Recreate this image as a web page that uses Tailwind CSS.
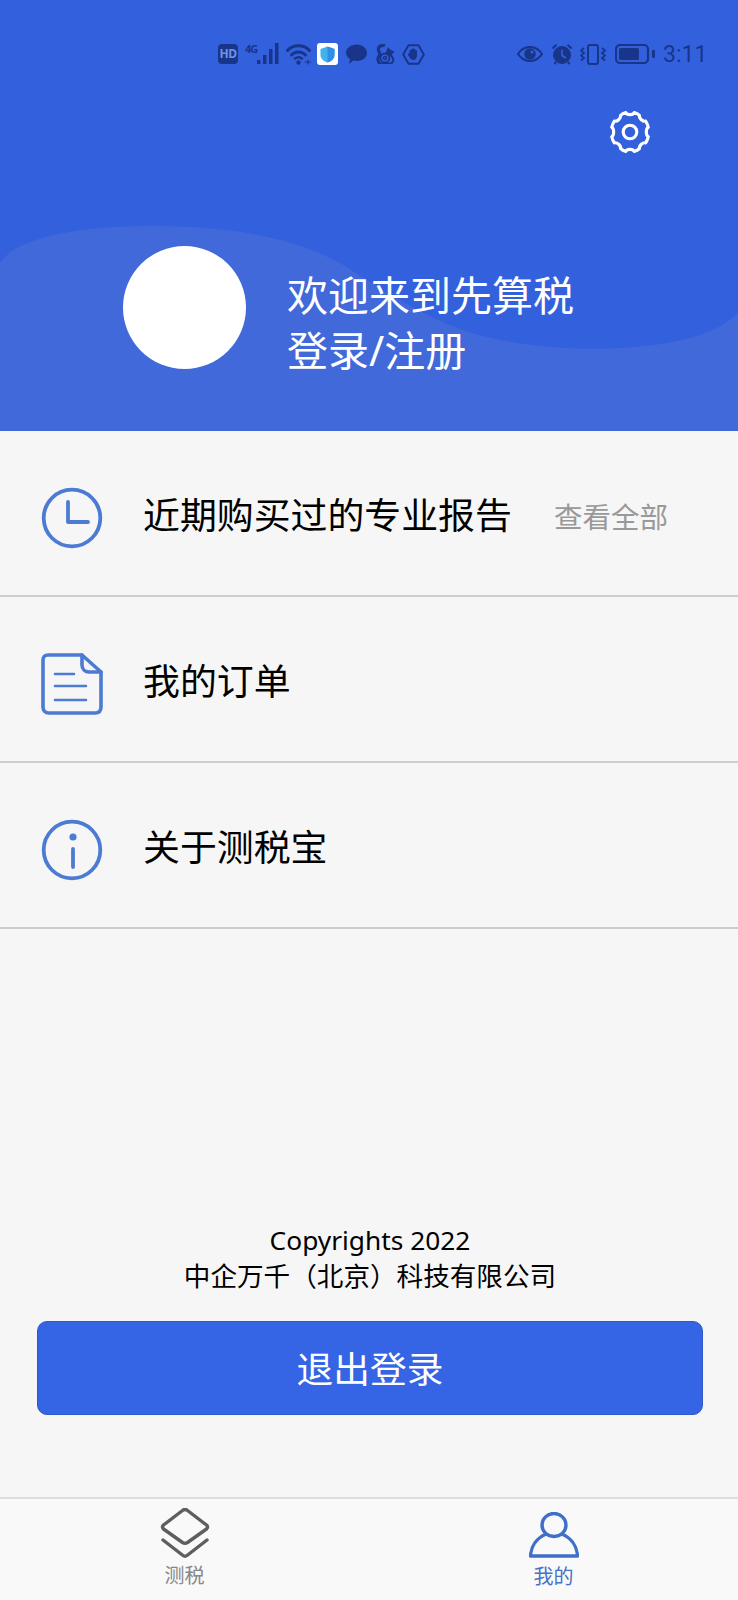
<!DOCTYPE html>
<html lang="zh-CN">

<head>
  <meta charset="UTF-8" />
  <meta name="viewport" content="width=device-width, initial-scale=1.0" />
  <title>我的</title>
  <script src="https://cdn.jsdelivr.net/npm/@tailwindcss/browser@4"></script>
</head>

<body class="bg-[#f6f6f6] font-['Noto_Sans','Noto_Sans_CJK_SC',sans-serif] text-black">
  <div class="w-[738px] h-[1600px] flex flex-col overflow-hidden">

    <!-- Header -->
    <header class="relative h-[431px] bg-[#3361de] shrink-0 overflow-hidden">
      <svg class="absolute inset-0" width="738" height="431" viewBox="0 0 738 431">
        <path d="M0 263C14 240 70 226 150 226C240 226 300 240 345 266C395 298 440 328 500 340C560 352 640 352 690 338C715 331 730 322 738 312V431H0Z" fill="#4169d9" />
      </svg>

      <!-- Status bar -->
      <div class="relative flex items-center h-[24px] mt-[42px] pl-[218px] text-[#18358a]">
        <div class="w-[20px] h-[20px] rounded-[4px] bg-[#18358a] flex items-center justify-center text-[#6f93e8] text-[12px] font-bold leading-none tracking-[-0.5px]">HD</div>
        <div class="w-[12px] ml-[7px] mb-[11px] text-[11px] font-bold leading-none tracking-[-1px]">4G</div>
        <svg width="22" height="22" viewBox="0 0 22 22" fill="currentColor">
          <rect x="0" y="17" width="3.500" height="4" />
          <rect x="6" y="12" width="3.500" height="9" />
          <rect x="12" y="6" width="3.500" height="15" />
          <rect x="18" y="0" width="3.500" height="21" />
        </svg>
        <svg class="ml-[7px]" width="25" height="22" viewBox="0 0 25 22" fill="none" stroke="currentColor" stroke-width="3" stroke-linecap="round">
          <path d="M1.500 7.500C7 1 18 1 23.500 7.500" />
          <path d="M5.500 12C9 8 16 8 19.500 12" />
          <path d="M9 15.500C11 14 14 14 16 15.500" stroke-width="2.400" />
          <circle cx="12.500" cy="19.500" r="2.200" fill="currentColor" stroke="none" />
          <path d="M19 19H24.500M22 17V21" stroke-width="1.200" />
        </svg>
        <div class="ml-[6px] w-[21px] h-[22px] rounded-[3px] bg-white flex items-center justify-center">
          <svg width="15" height="17" viewBox="0 0 15 17">
            <path d="M7.500 0.500L14.500 3V9C14.500 13 11 15.500 7.500 16.500C4 15.500 0.500 13 0.500 9V3Z" fill="#45b0ee" />
            <path d="M7.500 0.500L14.500 3V9C14.500 13 11 15.500 7.500 16.500Z" fill="#2f8fe6" />
          </svg>
        </div>
        <svg class="ml-[8px]" width="21" height="20" viewBox="0 0 21 20" fill="currentColor">
          <path d="M10.500 0.500C16 0.500 21 4 21 9C21 14 16 17 10.500 17C9.500 17 8.500 16.900 7.500 16.600L3 20L4 15C1.800 13.500 0 11.500 0 9C0 4 5 0.500 10.500 0.500Z" />
        </svg>
        <svg class="ml-[8px]" width="20" height="20" viewBox="0 0 20 20" fill="none" stroke="currentColor">
          <path d="M10 1.500C5.500 0.500 2.500 3.500 3.500 6.500C4.500 9 6 9.500 3.500 13C2.500 15 3 18 5 19.500" stroke-width="3.200" />
          <circle cx="10" cy="14" r="4.500" stroke-width="1.800" />
          <circle cx="10" cy="14" r="1.500" stroke-width="1.400" />
          <path d="M5 19.500H16C18.500 18 19 15 17 12.500L12.500 8.500" stroke-width="2" />
          <path d="M10.500 9.500L13 3L15 5.500L19.500 7.500L16.500 11L13 11Z" fill="currentColor" stroke="none" />
        </svg>
        <svg class="ml-[7px]" width="23" height="21" viewBox="0 0 23 21">
          <path d="M6.500 1.200H16.500L21.800 10.500L16.500 19.800H6.500L1.200 10.500Z" fill="none" stroke="currentColor" stroke-width="2" stroke-linejoin="round" />
          <path d="M7.500 9.500V6.800C7.500 5.800 9 5.800 9 6.800V5.500C9 4.500 10.500 4.500 10.500 5.500V5C10.500 4 12 4 12 5V5.500C12 4.500 13.500 4.500 13.500 5.500V6.800C13.500 5.800 15 5.800 15 6.800V11.500C15 14 13.500 16 11.500 16C9.500 16 8.500 15 7.500 13.500L6 11C5.500 10 6.800 9 7.500 9.500Z" fill="currentColor" />
        </svg>

        <svg class="ml-[92px]" width="26" height="16" viewBox="0 0 26 16">
          <path d="M1 8C4 3.500 8 1 13 1C18 1 22 3.500 25 8C22 12.500 18 15 13 15C8 15 4 12.500 1 8Z" fill="none" stroke="currentColor" stroke-width="2.200" />
          <circle cx="13" cy="8" r="5.800" fill="currentColor" />
          <circle cx="15" cy="6" r="1.500" fill="#3361de" />
        </svg>
        <svg class="ml-[8px]" width="22" height="22" viewBox="0 0 22 22" fill="none" stroke="currentColor">
          <circle cx="11" cy="12" r="8.500" fill="currentColor" />
          <path d="M11 6.500V12.500L15 15" stroke="#3361de" stroke-width="1.600" />
          <path d="M1.500 5.500L5.500 1.800M20.500 5.500L16.500 1.800M5 19L3.500 21M17 19L18.500 21" stroke-width="2.200" />
        </svg>
        <svg class="ml-[7px]" width="26" height="21" viewBox="0 0 26 21" fill="none" stroke="currentColor" stroke-width="2">
          <rect x="8" y="1" width="10" height="19" rx="2" />
          <path d="M4 4L1 6.500L4 9L1 11.500L4 14L1 16.500M22 4L25 6.500L22 9L25 11.500L22 14L25 16.500" stroke-width="1.800" />
        </svg>
        <svg class="ml-[9px]" width="40" height="20" viewBox="0 0 40 20">
          <rect x="1" y="1" width="32" height="18" rx="4" fill="none" stroke="currentColor" stroke-width="2.200" />
          <rect x="4" y="4" width="20" height="12" rx="1.500" fill="currentColor" />
          <rect x="37" y="6" width="3" height="8" rx="1" fill="currentColor" />
        </svg>
        <span class="ml-[8px] text-[23px] font-['Roboto'] leading-none">3:11</span>
      </div>

      <!-- Settings -->
      <div class="relative flex justify-end pr-[85px] mt-[43px]">
        <svg width="46" height="46" viewBox="0 0 44 44" fill="none" stroke="#fff" stroke-width="3" stroke-linejoin="round">
          <path d="M18 3.500C19 6 25 6 26 3.500C27.500 3.800 30 5 31 6C30.500 9 34.500 12.500 37 11.500C38 13 39 15.500 39.500 17.500C37 18.500 37 25.500 39.500 26.500C39 28.500 38 31 37 32.500C34.500 31.500 30.500 35 31 38C30 39 27.500 40.200 26 40.500C25 38 19 38 18 40.500C16.500 40.200 14 39 13 38C13.500 35 9.500 31.500 7 32.500C6 31 5 28.500 4.500 26.500C7 25.500 7 18.500 4.500 17.500C5 15.500 6 13 7 11.500C9.500 12.500 13.500 9 13 6C14 5 16.500 3.800 18 3.500Z" />
          <circle cx="22" cy="22" r="6.500" />
        </svg>
      </div>

      <!-- Profile -->
      <div class="relative flex items-start pl-[123px] mt-[91px]">
        <div class="w-[123px] h-[123px] rounded-full bg-white shrink-0"></div>
        <div class="ml-[41px] mt-[22px] text-white text-[41px] leading-[55px]">
          <div>欢迎来到先算税</div>
          <div>登录/注册</div>
        </div>
      </div>
    </header>

    <!-- Menu rows -->
    <section class="shrink-0">
      <div class="flex items-center h-[166px] pt-[10px] pl-[41px] pr-[70px] border-b-2 border-[#cdcdcd]">
        <svg class="shrink-0" width="62" height="62" viewBox="0 0 62 62" fill="none" stroke="#4c7bd3" stroke-width="3.800" stroke-linecap="round" stroke-linejoin="round">
          <circle cx="31" cy="31" r="28.300" />
          <path d="M27 15V35H47" />
        </svg>
        <span class="ml-[40px] mb-[5px] text-[36.900px]">近期购买过的专业报告</span>
        <span class="ml-auto mb-[2px] text-[28.500px] text-[#999]">查看全部</span>
      </div>
      <div class="flex items-center h-[166px] pt-[10px] pl-[41px] border-b-2 border-[#cdcdcd]">
        <svg class="shrink-0" width="62" height="62" viewBox="0 0 62 62" fill="none" stroke="#4c7bd3" stroke-width="3.600" stroke-linecap="round" stroke-linejoin="round">
          <path d="M7 2H41L60 19V54C60 57.500 58 60 54 60H8C4 60 2 57.500 2 54V7C2 4 4 2 7 2Z" />
          <path d="M41 2V12C41 16 44 19 48 19H60" />
          <path d="M14 21H33M14 33H45M14 47H45" stroke-width="2.600" />
        </svg>
        <span class="ml-[40px] mb-[5px] text-[36.900px]">我的订单</span>
      </div>
      <div class="flex items-center h-[166px] pt-[10px] pl-[41px] border-b-2 border-[#cdcdcd]">
        <svg class="shrink-0" width="62" height="62" viewBox="0 0 62 62" fill="none" stroke="#4c7bd3" stroke-width="3.800" stroke-linecap="round">
          <circle cx="31" cy="31" r="28.300" />
          <circle cx="32" cy="18" r="3.600" fill="#4c7bd3" stroke="none" />
          <path d="M32 30V48" />
        </svg>
        <span class="ml-[40px] mb-[5px] text-[36.900px]">关于测税宝</span>
      </div>
    </section>

    <!-- Footer -->
    <section class="flex-1 flex flex-col justify-end pl-[37px] pr-[35px] pb-[82px]">
      <div class="text-center text-[26.600px] leading-[36px]">
        <div class="text-[26.300px]">Copyrights 2022</div>
        <div>中企万千（北京）科技有限公司</div>
      </div>
      <button class="mt-[27px] h-[94px] w-full pt-[3px] rounded-[10px] bg-[#3564e4] border border-[#2f58c8] text-white text-[36.700px]">退出登录</button>
    </section>

    <!-- Tab bar -->
    <nav class="h-[103px] shrink-0 flex border-t-2 border-[#dedede] bg-[#f9f9f9]">
      <div class="w-1/2 flex flex-col items-center pt-[9px] text-[#888]">
        <svg width="50" height="50" viewBox="0 0 50 50" fill="none" stroke="#5e5e5e" stroke-width="3.400" stroke-linejoin="round" stroke-linecap="round">
          <path d="M22.500 2.500C24 1.200 26 1.200 27.500 2.500L46.500 17C48 18.500 48 19.500 46.500 21L27.500 34.500C26 35.500 24 35.500 22.500 34.500L3.500 21C2 19.500 2 18.500 3.500 17Z" />
          <path d="M3 32L23 47.500C24.200 48.400 25.800 48.400 27 47.500L47 32" />
        </svg>
        <span class="text-[20px] leading-[22px] mt-[7px]">测税</span>
      </div>
      <div class="w-1/2 flex flex-col items-center pt-[13px] text-[#4a72c4]">
        <svg width="50" height="46" viewBox="0 0 50 46" fill="none" stroke="#3f6fca" stroke-width="3.400" stroke-linejoin="round">
          <ellipse cx="25" cy="13" rx="12" ry="11.500" />
          <path d="M17 22C8 26 2 34 1.500 44H48.500C48 34 42 26 33 22" />
        </svg>
        <span class="text-[20px] leading-[22px] mt-[8px]">我的</span>
      </div>
    </nav>

  </div>
</body>
</html>
